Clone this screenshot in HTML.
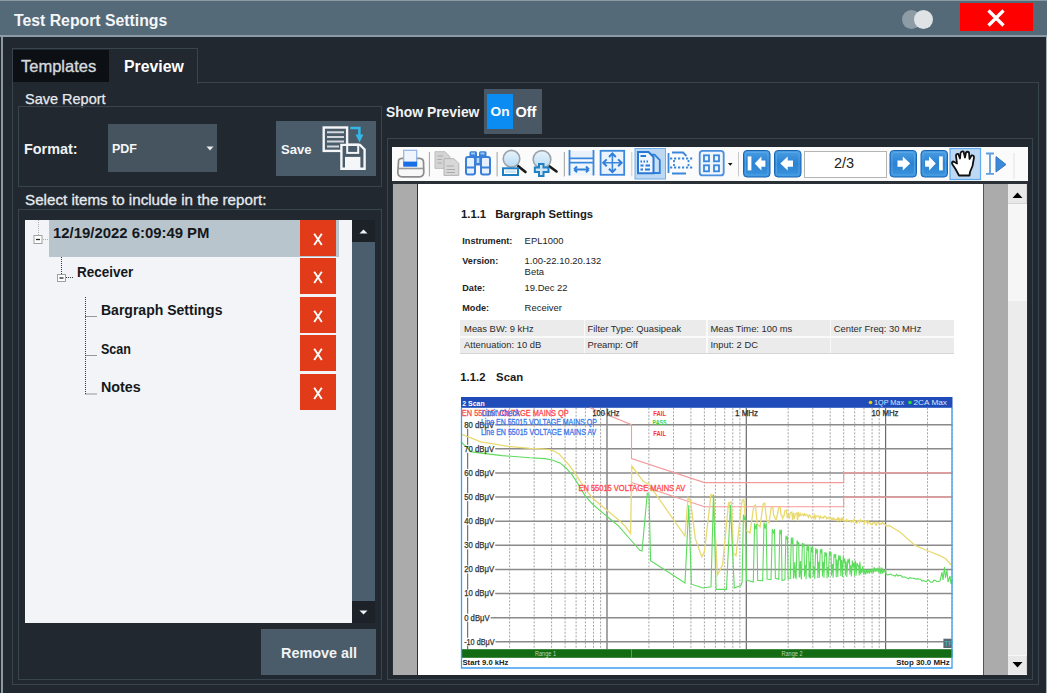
<!DOCTYPE html>
<html><head><meta charset="utf-8">
<style>
html,body{margin:0;padding:0;}
body{width:1047px;height:693px;overflow:hidden;background:#212830;position:relative;font-family:"Liberation Sans",sans-serif;color:#eef0f2;}
.a{position:absolute;}
.t{position:absolute;white-space:nowrap;line-height:1;}
.b{font-weight:bold;}
.bd{position:absolute;border:1px solid #38444e;box-sizing:border-box;}
</style></head><body>
<!-- window frame -->
<div class="a" style="left:0;top:0;width:1047px;height:693px;background:#212830;"></div>
<div class="a" style="left:1px;top:0;width:2px;height:693px;background:#8c9aa4;"></div>
<div class="a" style="left:1046px;top:0;width:1px;height:693px;background:#a4b0b8;"></div>
<!-- title bar -->
<div class="a" style="left:0;top:0;width:1047px;height:35px;background:#556a79;"></div>
<div class="a" style="left:0;top:0;width:1047px;height:1px;background:#8c9aa4;"></div>
<div class="a" style="left:0;top:35px;width:1047px;height:2px;background:#8c9ba5;"></div>
<div class="t b" style="left:14px;top:13px;font-size:15.8px;color:#f4f6f8;">Test Report Settings</div>
<div class="a" style="left:902px;top:10px;width:19px;height:19px;border-radius:50%;background:#8e9ca6;"></div>
<div class="a" style="left:914px;top:10px;width:19px;height:19px;border-radius:50%;background:#dfe3e6;"></div>
<div class="a" style="left:960px;top:3px;width:73px;height:28px;background:#fe0000;"></div>
<svg class="a" style="left:960px;top:3px" width="73" height="28"><path d="M28.5 7.5 L43.5 22.5 M43.5 7.5 L28.5 22.5" stroke="#fff" stroke-width="3.2"/></svg>

<!-- tabs -->
<div class="bd" style="left:12px;top:48px;width:186px;height:36px;border-bottom:none;"></div>
<div class="a" style="left:12.5px;top:50px;width:96.5px;height:32px;background:#0c1014;"></div>
<div class="t" style="left:21px;top:58px;font-size:16.5px;color:#d4d9de;-webkit-text-stroke:0.35px #d4d9de;">Templates</div>
<div class="t b" style="left:124px;top:58.5px;font-size:15.8px;color:#ffffff;">Preview</div>

<!-- main panel -->
<div class="bd" style="left:12px;top:82px;width:1027px;height:603px;border-top:none;"></div>
<div class="a" style="left:197px;top:82px;width:842px;height:1px;background:#38444e;"></div>

<!-- Save report group -->
<div class="t" style="left:25px;top:91.5px;font-size:14.5px;color:#e6eaee;-webkit-text-stroke:0.25px #e6eaee;">Save Report</div>
<div class="bd" style="left:18px;top:106px;width:364px;height:81px;"></div>
<div class="t b" style="left:24px;top:142px;font-size:14.4px;color:#f0f2f4;">Format:</div>
<div class="a" style="left:108px;top:124px;width:109px;height:48px;background:#46545f;"></div>
<div class="t b" style="left:112px;top:143px;font-size:12.5px;color:#f4f6f8;">PDF</div>
<svg class="a" style="left:206px;top:145.5px" width="9" height="6"><path d="M0.5 0.5 L7.5 0.5 L4 4.5 Z" fill="#e8ecef"/></svg>
<div class="a" style="left:276px;top:121px;width:100px;height:55px;background:#4a5b69;"></div>
<div class="t b" style="left:281px;top:143px;font-size:13.1px;color:#f4f6f8;">Save</div>

<!-- Select items -->
<div class="t" style="left:25px;top:192px;font-size:15.2px;color:#e6eaee;-webkit-text-stroke:0.3px #e6eaee;">Select items to include in the report:</div>
<div class="bd" style="left:18px;top:209px;width:364px;height:471px;"></div>
<div class="a" style="left:25px;top:220px;width:327px;height:403px;background:#f2f4f7;"></div>
<div class="a" style="left:352px;top:220px;width:23px;height:403px;background:#1c2228;"></div>
<div class="a" style="left:352px;top:242px;width:23px;height:359px;background:#4a5e6e;"></div>
<div class="a" style="left:261px;top:629px;width:115px;height:46px;background:#4a5b69;"></div>
<div class="t b" style="left:281px;top:646px;font-size:14.4px;color:#f0f2f4;">Remove all</div>


<!-- tree content -->
<div class="a" style="left:49px;top:220px;width:290px;height:37px;background:#b9c5cd;"></div>
<svg class="a" style="left:25px;top:220px" width="327" height="403">
<g stroke="#3a3a3a" stroke-width="1" stroke-dasharray="1,1" fill="none">
<path d="M13.5 0 V15" stroke="#b0b0b0"/><path d="M18 19.5 H24" stroke="#b0b0b0"/>
<path d="M36.5 37 V54"/><path d="M41 57.5 H48"/>
<path d="M60.5 77 V174"/><path d="M60.5 96.5 H72"/><path d="M60.5 135.5 H72"/><path d="M60.5 174 H72"/>
</g>
<rect x="9" y="15.5" width="8" height="8" fill="#fff" stroke="#a0a0a0"/><path d="M11 19.5 H15" stroke="#222" stroke-width="1.3"/>
<rect x="32.5" y="54.5" width="8" height="7" fill="#fff" stroke="#a0a0a0"/><path d="M34.5 58 H38.5" stroke="#222" stroke-width="1.3"/>
</svg>
<div class="t b" style="left:53px;top:225.5px;font-size:14.9px;color:#14181c;">12/19/2022 6:09:49 PM</div>
<div class="t b" style="left:77px;top:264.5px;font-size:14.2px;color:#14181c;transform:scaleX(0.95);transform-origin:0 0;">Receiver</div>
<div class="t b" style="left:101px;top:303px;font-size:14.6px;color:#14181c;transform:scaleX(0.96);transform-origin:0 0;">Bargraph Settings</div>
<div class="t b" style="left:101px;top:341.5px;font-size:14.6px;color:#14181c;transform:scaleX(0.86);transform-origin:0 0;">Scan</div>
<div class="t b" style="left:101px;top:380px;font-size:14.6px;color:#14181c;transform:scaleX(0.98);transform-origin:0 0;">Notes</div>
<div class="a" style="left:300px;top:220.0px;width:36px;height:36px;background:#e23b19;"></div>
<div class="a" style="left:300px;top:258.4px;width:36px;height:36px;background:#e23b19;"></div>
<div class="a" style="left:300px;top:296.8px;width:36px;height:36px;background:#e23b19;"></div>
<div class="a" style="left:300px;top:335.2px;width:36px;height:36px;background:#e23b19;"></div>
<div class="a" style="left:300px;top:373.6px;width:36px;height:36px;background:#e23b19;"></div>
<svg class="a" style="left:300px;top:220.0px" width="36" height="36"><path d="M14.2 13.7 L21.8 25 M21.8 13.7 L14.2 25" stroke="#fff" stroke-width="1.9" stroke-linecap="butt"/></svg>
<svg class="a" style="left:300px;top:258.4px" width="36" height="36"><path d="M14.2 13.7 L21.8 25 M21.8 13.7 L14.2 25" stroke="#fff" stroke-width="1.9" stroke-linecap="butt"/></svg>
<svg class="a" style="left:300px;top:296.8px" width="36" height="36"><path d="M14.2 13.7 L21.8 25 M21.8 13.7 L14.2 25" stroke="#fff" stroke-width="1.9" stroke-linecap="butt"/></svg>
<svg class="a" style="left:300px;top:335.2px" width="36" height="36"><path d="M14.2 13.7 L21.8 25 M21.8 13.7 L14.2 25" stroke="#fff" stroke-width="1.9" stroke-linecap="butt"/></svg>
<svg class="a" style="left:300px;top:373.6px" width="36" height="36"><path d="M14.2 13.7 L21.8 25 M21.8 13.7 L14.2 25" stroke="#fff" stroke-width="1.9" stroke-linecap="butt"/></svg>
<svg class="a" style="left:358px;top:228px" width="12" height="8"><path d="M1.5 5.5 L5.5 1.5 L9.5 5.5 Z" fill="#f0f2f4"/></svg>
<svg class="a" style="left:358px;top:609px" width="12" height="8"><path d="M1.5 1.5 L5.5 5.5 L9.5 1.5 Z" fill="#f0f2f4"/></svg>
<svg class="a" style="left:315px;top:120px" width="60" height="55">
<rect x="8.7" y="7.5" width="23.4" height="23.4" fill="none" stroke="#f4f6f8" stroke-width="2.4"/>
<g stroke="#d4d8dc" stroke-width="2"><path d="M12 12.3 H29 M12 17.1 H29 M12 21.4 H29 M12 26.6 H24"/></g>
<path d="M26.4 24.9 H45 L49.6 29.5 V48.8 H26.4 Z" fill="#4a5b69" stroke="#f4f6f8" stroke-width="2.4"/>
<rect x="32.2" y="24.5" width="11" height="8.4" fill="none" stroke="#f4f6f8" stroke-width="2"/>
<rect x="30" y="36.9" width="15.4" height="11.5" fill="#f4f6f8"/>
<path d="M35.3 7.9 H44.4 V15" fill="none" stroke="#33b7e8" stroke-width="2.5"/>
<path d="M40.5 14.5 H48.4 L44.5 22.6 Z" fill="#33b7e8"/>
</svg>
<!-- Preview group -->
<div class="t b" style="left:386px;top:106px;font-size:13.9px;color:#f0f2f4;">Show Preview</div>
<div class="a" style="left:484px;top:89px;width:58px;height:45px;background:#4a5866;"></div>
<div class="a" style="left:487px;top:94px;width:26px;height:35px;background:#0a8cf2;"></div>
<div class="t b" style="left:490.5px;top:105px;font-size:13.7px;color:#fff;">On</div>
<div class="t b" style="left:515.5px;top:105px;font-size:14.5px;color:#fff;">Off</div>
<div class="bd" style="left:387px;top:138px;width:646px;height:542px;"></div>
<div class="a" style="left:392px;top:147px;width:636px;height:34px;background:#fbfbfb;"></div>
<svg class="a" style="left:392px;top:147px" width="636" height="34">
<defs>
<linearGradient id="nb" x1="0" y1="0" x2="0" y2="1"><stop offset="0" stop-color="#4c9ee2"/><stop offset="0.5" stop-color="#2a82d2"/><stop offset="1" stop-color="#3d95dd"/></linearGradient>
<linearGradient id="lens" x1="0" y1="0" x2="0" y2="1"><stop offset="0" stop-color="#e8f4fc"/><stop offset="1" stop-color="#b9dcf4"/></linearGradient>
</defs>
<!-- printer -->
<path d="M6.5 15 Q6 11.5 10 11.3 H27.5 Q31.5 11.5 31.5 15 L31.8 25.5 Q31.5 29.5 27.5 29.8 H10 Q6 29.5 5.8 25.5 Z" fill="#f8f8f8" stroke="#8c8c8c" stroke-width="1.7"/>
<path d="M6.5 21.5 H31" stroke="#9a9a9a" stroke-width="1.6"/>
<rect x="11.7" y="3.3" width="13" height="12" fill="#f0f5fd" stroke="#8fb3e6" stroke-width="1.2"/>
<rect x="11.2" y="14.7" width="14" height="5" fill="#1a6fe6"/>
<path d="M37.4 5 V29.4" stroke="#a0a0a0" stroke-width="1"/>
<!-- copy -->
<path d="M43 4.7 H53 L57.8 9.5 V21.4 H43 Z" fill="#d4d4d4" stroke="#bdbdbd" stroke-width="1"/>
<path d="M52 11.7 H62 L66.8 16.5 V28.4 H52 Z" fill="#d8d8d8" stroke="#b4b4b4" stroke-width="1"/>
<path d="M45.5 9 H51 M45.5 12.5 H50 M45.5 16 H50 M54.5 19 H62 M54.5 22.5 H63 M54.5 25.5 H63" stroke="#ababab" stroke-width="1"/>
<!-- binoculars -->
<rect x="77.5" y="4.3" width="7.5" height="6" rx="1.5" fill="#3a80d8"/>
<rect x="87" y="4.3" width="7.5" height="6" rx="1.5" fill="#3a80d8"/>
<rect x="79" y="5.5" width="4" height="2" fill="#9cc6f2"/>
<rect x="88.5" y="5.5" width="4" height="2" fill="#9cc6f2"/>
<rect x="74" y="10" width="9" height="17.6" rx="2" fill="#e6f1fc" stroke="#3a80d8" stroke-width="2"/>
<rect x="89" y="10" width="9" height="17.6" rx="2" fill="#e6f1fc" stroke="#3a80d8" stroke-width="2"/>
<path d="M74 20.5 H83 M89 20.5 H98" stroke="#3a80d8" stroke-width="2"/>
<rect x="83" y="9" width="6" height="9.5" fill="#3a80d8"/>
<rect x="84.7" y="11" width="2.6" height="5" fill="#b8d8f6"/>
<path d="M105.1 5 V29.4" stroke="#a0a0a0" stroke-width="1"/>
<!-- zoom out -->
<path d="M126 19 L133.5 25" stroke="#1a1a1a" stroke-width="2.6" stroke-linecap="round"/>
<circle cx="119.5" cy="11.7" r="8.3" fill="url(#lens)" stroke="#9ca4aa" stroke-width="1.6"/>
<rect x="111" y="21.3" width="15" height="6.7" fill="#fff" stroke="#1f80c4" stroke-width="2"/>
<rect x="113" y="23.3" width="11" height="2.7" fill="#cfe6f6"/>
<!-- zoom in -->
<path d="M157 19 L164.5 24.5" stroke="#1a1a1a" stroke-width="2.6" stroke-linecap="round"/>
<circle cx="150" cy="12.4" r="8.8" fill="url(#lens)" stroke="#9ca4aa" stroke-width="1.6"/>
<path d="M147 17 H151.5 V20.5 H156.5 V25 H151.5 V29 H147 V25 H142.8 V20.5 H147 Z" fill="#cfe6f6" stroke="#1f80c4" stroke-width="2"/>
<path d="M172.3 5 V29.4" stroke="#a0a0a0" stroke-width="1"/>
<!-- fit width -->
<rect x="178" y="4" width="23.5" height="7" fill="#e9f2fb"/>
<rect x="178" y="15.5" width="23.5" height="13" fill="#eef5fc"/>
<path d="M177.5 3 V28.6 M201.5 3 V28.6 M177.5 11.4 H201.5 M177.5 15.7 H201.5" stroke="#3b87dc" stroke-width="1.8" fill="none"/>
<path d="M182 22.4 H197 M182 22.4 L185 19.5 M182 22.4 L185 25.3 M197 22.4 L194 19.5 M197 22.4 L194 25.3" stroke="#2f7fd8" stroke-width="2" fill="none"/>
<!-- fit page -->
<rect x="208.6" y="3.8" width="23.6" height="24" fill="#eaf3fc" stroke="#3b87dc" stroke-width="1.8"/>
<path d="M220.4 7 V25 M211.5 15.8 H229.5" stroke="#3b87dc" stroke-width="1.6"/>
<path d="M217 10 L220.4 6.5 L223.8 10 M217 21.8 L220.4 25.2 L223.8 21.8 M214.7 12.4 L211.2 15.8 L214.7 19.2 M226.1 12.4 L229.6 15.8 L226.1 19.2" stroke="#2f7fd8" stroke-width="2" fill="none"/>
<path d="M239.8 5 V29.4" stroke="#c8c8c8" stroke-width="1"/>
<!-- single page selected -->
<rect x="243" y="1.5" width="30.5" height="30.5" fill="#bcd8f2" stroke="#72aeea" stroke-width="1"/>
<path d="M255 7.7 H262.5 L267.8 13 V26 H255 Z" fill="#c9e0f6" stroke="#2f7fd8" stroke-width="1.8"/>
<path d="M246 5 H256.5 L261.5 10 V26.3 H246 Z" fill="#eef5fc" stroke="#2a78d6" stroke-width="2"/>
<path d="M248.5 9 H254 M248.5 14.5 H250 M251.5 14.5 H253 M254.5 14.5 H256 M248.5 18.5 H251.5 M253.5 18.5 H258 M248.5 22.5 H251 M253 22.5 H258" stroke="#2a78d6" stroke-width="1.8"/>
<!-- continuous -->
<path d="M276.5 6 V26 M280 5.5 H291 L294.5 9 M280 26.5 H294" stroke="#3b87dc" stroke-width="1.8" fill="none"/>
<path d="M278 11.5 H300.5 M278 20.5 H300.5 M282 13 V19 M296.5 13 V19" stroke="#3b87dc" stroke-width="1.8" stroke-dasharray="2.2,1.8" fill="none"/>
<!-- grid -->
<rect x="307.7" y="3.8" width="24" height="24.6" rx="3" fill="#eef5fc" stroke="#4a8ee0" stroke-width="1.8"/>
<rect x="312" y="8.3" width="5" height="6" fill="none" stroke="#3b87dc" stroke-width="1.8"/>
<rect x="322" y="8.3" width="5" height="6" fill="none" stroke="#3b87dc" stroke-width="1.8"/>
<rect x="312" y="18.3" width="5" height="6" fill="none" stroke="#3b87dc" stroke-width="1.8"/>
<rect x="322" y="18.3" width="5" height="6" fill="none" stroke="#3b87dc" stroke-width="1.8"/>
<path d="M336 16 H340.5 L338.25 18.7 Z" fill="#111"/>
<path d="M346.5 5 V29.4" stroke="#c8c8c8" stroke-width="1"/>
<g transform="translate(351,0)"><rect x="0.5" y="3.5" width="26.5" height="26.5" rx="3.5" fill="url(#nb)" stroke="#1a64b4" stroke-width="1"/><rect x="2.5" y="5.5" width="22.5" height="22.5" rx="2.5" fill="none" stroke="#5fb0ee" stroke-width="1" opacity="0.6"/><rect x="4.7" y="9.4" width="3.7" height="14" fill="#fff"/><path d="M11.7 16.4 L18.4 9.4 V13.4 H22.4 V19.7 H18.4 V23.4 Z" fill="#fff"/></g>
<g transform="translate(382,0)"><rect x="0.5" y="3.5" width="26.5" height="26.5" rx="3.5" fill="url(#nb)" stroke="#1a64b4" stroke-width="1"/><rect x="2.5" y="5.5" width="22.5" height="22.5" rx="2.5" fill="none" stroke="#5fb0ee" stroke-width="1" opacity="0.6"/><path d="M6.3 16.4 L13.7 9.4 V13.4 H19 V19.7 H13.7 V23.4 Z" fill="#fff"/></g>
<g transform="translate(497.5,0)"><rect x="0.5" y="3.5" width="26.5" height="26.5" rx="3.5" fill="url(#nb)" stroke="#1a64b4" stroke-width="1"/><rect x="2.5" y="5.5" width="22.5" height="22.5" rx="2.5" fill="none" stroke="#5fb0ee" stroke-width="1" opacity="0.6"/><path d="M20.7 16.4 L13.3 9.4 V13.4 H8 V19.7 H13.3 V23.4 Z" fill="#fff"/></g>
<g transform="translate(528.5,0)"><rect x="0.5" y="3.5" width="26.5" height="26.5" rx="3.5" fill="url(#nb)" stroke="#1a64b4" stroke-width="1"/><rect x="2.5" y="5.5" width="22.5" height="22.5" rx="2.5" fill="none" stroke="#5fb0ee" stroke-width="1" opacity="0.6"/><rect x="18.6" y="9.4" width="3.7" height="14" fill="#fff"/><path d="M15.3 16.4 L8.6 9.4 V13.4 H4.6 V19.7 H8.6 V23.4 Z" fill="#fff"/></g>
<rect x="412.5" y="4.5" width="82" height="26" fill="#fff" stroke="#b4b4b4" stroke-width="1"/>
<!-- hand selected -->
<rect x="558" y="1.5" width="30.5" height="31" fill="#bcd8f2" stroke="#62aaee" stroke-width="1.2"/>
<path d="M567 28.5 L563.5 22 L560.5 17.5 Q559 15 561.5 14.5 L565 16.5 L564 9 Q564 6.5 566.2 7 L568 11.5 L568.5 6 Q569.5 3.8 571.5 4.5 L573 10.5 L574 5.5 Q575.5 4 577 5.5 L577.5 12 L579.5 8.5 Q582 8 582 10.5 L580.5 19 L578 25 L577.5 28.5 Z" fill="#fff" stroke="#111" stroke-width="1.8" stroke-linejoin="round"/>
<!-- text select -->
<path d="M594 6.5 H602 M594 26.8 H602 M598 6.5 V26.8" stroke="#5d9ee0" stroke-width="1.8"/>
<path d="M604 9.6 L614 17.5 L604 25 Z" fill="#3d88d8" stroke="#2f78c8" stroke-width="1"/>
<path d="M622 6 V32" stroke="#e2e2e2" stroke-width="1"/>
</svg>
<div class="t" style="left:834px;top:156px;font-size:14.5px;color:#222;">2/3</div>
<div class="a" style="left:392px;top:181px;width:636px;height:494px;background:#2b3036;"></div>
<div class="a" style="left:393px;top:184px;width:24px;height:491px;background:#ababab;"></div>
<div class="a" style="left:418px;top:184px;width:565px;height:491px;background:#ffffff;"></div>
<div class="a" style="left:983px;top:184px;width:25px;height:491px;background:#ababab;"></div><div class="a" style="left:983px;top:184px;width:1px;height:491px;background:#555;"></div>
<div class="a" style="left:1008px;top:184px;width:19px;height:491px;background:#f0f0f0;"></div>









<!-- PAGE START -->
<div class="t b" style="left:461px;top:208.63px;font-size:11.3px;color:#1a1a1a;">1.1.1</div>
<div class="t b" style="left:495.2px;top:208.63px;font-size:11.3px;color:#1a1a1a;">Bargraph Settings</div>
<div class="t b" style="left:462.3px;top:237.20px;font-size:9.1px;color:#222;">Instrument:</div>
<div class="t" style="left:524.6px;top:236.10px;font-size:9.45px;color:#222;">EPL1000</div>
<div class="t b" style="left:462.3px;top:257.20px;font-size:9.1px;color:#222;">Version:</div>
<div class="t" style="left:524.6px;top:256.10px;font-size:9.45px;color:#222;">1.00-22.10.20.132</div>
<div class="t b" style="left:462.3px;top:284.00px;font-size:9.1px;color:#222;">Date:</div>
<div class="t" style="left:524.6px;top:282.90px;font-size:9.45px;color:#222;">19.Dec 22</div>
<div class="t b" style="left:462.3px;top:303.90px;font-size:9.1px;color:#222;">Mode:</div>
<div class="t" style="left:524.6px;top:302.80px;font-size:9.45px;color:#222;">Receiver</div>
<div class="t" style="left:524.6px;top:266.80px;font-size:9.45px;color:#222;">Beta</div>
<div class="a" style="left:460px;top:320px;width:494px;height:32.5px;background:#ebebeb;border-bottom:1px solid #d6d6d6;"></div>
<div class="a" style="left:460px;top:336px;width:494px;height:1.5px;background:#fafafa;"></div>
<div class="a" style="left:583.5px;top:320px;width:1.5px;height:32.5px;background:#fafafa;"></div>
<div class="a" style="left:706.4px;top:320px;width:1.5px;height:32.5px;background:#fafafa;"></div>
<div class="a" style="left:829.8px;top:320px;width:1.5px;height:32.5px;background:#fafafa;"></div>
<div class="t" style="left:464.1px;top:323.74px;font-size:9.4px;color:#2a2a2a;">Meas BW: 9 kHz</div>
<div class="t" style="left:464.1px;top:340.04px;font-size:9.4px;color:#2a2a2a;">Attenuation: 10 dB</div>
<div class="t" style="left:587.5px;top:323.74px;font-size:9.4px;color:#2a2a2a;">Filter Type: Quasipeak</div>
<div class="t" style="left:587.5px;top:340.04px;font-size:9.4px;color:#2a2a2a;">Preamp: Off</div>
<div class="t" style="left:710.5px;top:323.74px;font-size:9.4px;color:#2a2a2a;">Meas Time: 100 ms</div>
<div class="t" style="left:710.5px;top:340.04px;font-size:9.4px;color:#2a2a2a;">Input: 2 DC</div>
<div class="t" style="left:833.8px;top:323.74px;font-size:9.4px;color:#2a2a2a;">Center Freq: 30 MHz</div>
<div class="t b" style="left:460.3px;top:371.83px;font-size:11.3px;color:#1a1a1a;">1.1.2</div>
<div class="t b" style="left:496.1px;top:371.83px;font-size:11.3px;color:#1a1a1a;">Scan</div>
<svg class="a" style="left:0;top:0" width="1047" height="693" viewBox="0 0 1047 693">
<rect x="461" y="397" width="491.5" height="271.5" fill="#fff"/>
<rect x="461" y="397" width="491.5" height="10.800000000000011" fill="#1f4cb8"/>
<g stroke="#9c9c9c" stroke-width="0.9" stroke-dasharray="2,1.5" fill="none"><path d="M509.6 407.8 V649.2"/><path d="M534.2 407.8 V649.2"/><path d="M551.6 407.8 V649.2"/><path d="M565.1 407.8 V649.2"/><path d="M576.1 407.8 V649.2"/><path d="M585.4 407.8 V649.2"/><path d="M593.5 407.8 V649.2"/><path d="M600.6 407.8 V649.2"/><path d="M648.9 407.8 V649.2"/><path d="M673.5 407.8 V649.2"/><path d="M690.9 407.8 V649.2"/><path d="M704.4 407.8 V649.2"/><path d="M715.4 407.8 V649.2"/><path d="M724.7 407.8 V649.2"/><path d="M732.8 407.8 V649.2"/><path d="M739.9 407.8 V649.2"/><path d="M788.2 407.8 V649.2"/><path d="M812.8 407.8 V649.2"/><path d="M830.2 407.8 V649.2"/><path d="M843.7 407.8 V649.2"/><path d="M854.7 407.8 V649.2"/><path d="M864.0 407.8 V649.2"/><path d="M872.1 407.8 V649.2"/><path d="M879.2 407.8 V649.2"/><path d="M927.5 407.8 V649.2"/><path d="M952.1 407.8 V649.2"/></g>
<g stroke="#6a6a6a" stroke-width="1.2" fill="none"><path d="M607.0 407.8 V649.2"/><path d="M746.3 407.8 V649.2"/><path d="M885.6 407.8 V649.2"/></g>
<g stroke="#555" stroke-width="1" fill="none"><path d="M467.7 428.7 V444.8"/><path d="M467.7 452.8 V468.9"/><path d="M467.7 476.9 V493.1"/><path d="M467.7 501.1 V517.2"/><path d="M467.7 525.2 V541.3"/><path d="M467.7 549.3 V565.5"/><path d="M467.7 573.5 V589.6"/><path d="M467.7 597.6 V613.7"/><path d="M467.7 621.7 V637.8"/><path d="M467.7 645.8 V649.2"/></g>
<g stroke="#8a8a8a" stroke-width="1.5" fill="none"><path d="M495.2 424.7 H952.5"/><path d="M495.2 448.8 H952.5"/><path d="M495.2 472.9 H952.5"/><path d="M495.2 497.1 H952.5"/><path d="M495.2 521.2 H952.5"/><path d="M495.2 545.3 H952.5"/><path d="M495.2 569.5 H952.5"/><path d="M495.2 593.6 H952.5"/><path d="M490.6 617.7 H952.5"/><path d="M495.5 641.8 H952.5"/></g>
<polyline points="590.0,407.8 631.5,424.7 631.5,458.5 704.4,482.6 843.7,482.6 843.7,472.9 952.5,472.9" fill="none" stroke="#f59a9a" stroke-width="1.1"/>
<polyline points="631.5,482.6 704.4,506.7 843.7,506.7 843.7,497.1 952.5,497.1" fill="none" stroke="#f59a9a" stroke-width="1.1"/>
<polyline points="461.0,434.2 480.9,441.8 508.4,446.4 530.0,448.3 542.0,448.9 549.0,449.6 554.2,451.0 559.0,454.0 563.4,458.6 569.0,465.0 575.6,473.9 581.0,482.5 587.8,492.3 593.0,498.5 600.0,504.5 609.0,512.0 618.4,519.8 625.0,526.0 630.6,533.5 631.8,466.0 643.4,481.6 648.6,484.0 685.0,536.0 688.0,497.7 690.6,501.0 695.3,538.7 701.8,556.9 704.4,551.7 711.0,494.5 713.5,495.8 717.4,575.0 722.6,564.7 728.6,502.3 728.7,507.8 729.5,502.8 731.1,501.8 731.9,509.8 732.9,552.7 736.0,555.7 741.4,505.5 742.2,500.5 743.8,499.5 744.6,507.5 745.6,530.0 750.0,533.0 753.0,511.2 753.8,506.2 755.4,505.2 756.2,513.2 757.2,524.0 760.0,527.0 762.4,509.0 763.2,504.0 764.8,503.0 765.6,511.0 766.6,520.0 769.0,523.0 770.4,513.0 771.2,508.0 772.8,507.0 773.6,515.0 774.6,517.0 776.0,520.0 777.8,513.0 778.6,508.0 780.2,507.0 781.0,515.0 782.0,515.5 782.5,518.5 784.0,516.0 784.8,511.0 786.4,510.0 787.2,518.0 788.2,514.0 788.5,517.0 789.4,518.0 790.2,513.0 791.8,512.0 792.6,520.0 793.6,512.5 793.5,515.5 794.4,519.0 795.2,514.0 796.8,513.0 797.6,521.0 798.6,512.0 798.0,515.0 798.0,514.4 798.8,513.8 799.6,515.7 800.4,513.7 801.2,515.5 802.0,514.9 802.8,513.9 803.6,515.6 804.4,514.0 805.2,515.5 806.0,514.3 806.8,514.5 807.6,515.8 808.4,517.3 809.2,514.9 810.0,515.3 810.8,516.8 811.6,518.1 812.4,516.8 813.2,516.3 814.0,518.4 814.8,515.2 815.6,518.2 816.4,516.2 817.2,515.8 818.0,515.8 818.8,516.6 819.6,518.5 820.4,516.3 821.2,517.8 822.0,518.1 822.8,517.2 823.6,517.9 824.4,516.3 825.2,516.4 826.0,517.0 826.8,518.8 827.6,517.9 828.4,517.6 829.2,518.7 830.0,518.3 830.8,517.8 831.6,519.7 832.4,519.4 833.2,517.9 834.0,519.2 834.8,519.1 835.6,520.4 836.4,520.0 837.2,518.5 838.0,521.0 838.8,518.0 839.6,519.2 840.4,520.5 841.2,518.4 842.0,519.7 842.8,518.2 843.6,520.5 844.4,521.0 845.2,520.4 846.0,521.5 846.8,519.6 847.6,521.1 848.4,520.8 849.2,520.8 850.0,520.5 850.8,521.9 851.6,522.4 852.4,520.8 853.2,521.6 854.0,519.5 854.8,521.9 855.6,521.7 856.4,523.1 857.2,522.5 858.0,520.7 858.8,521.2 859.6,522.3 860.4,520.0 861.2,521.7 862.0,520.7 862.8,520.6 863.6,520.5 864.4,523.1 865.2,520.9 866.0,521.4 866.8,522.0 867.6,523.9 868.4,521.1 869.2,522.5 870.0,523.0 870.8,524.2 871.6,524.1 872.4,524.3 873.2,522.3 874.0,522.9 874.8,522.8 875.6,524.8 876.4,525.1 877.2,522.3 878.0,522.5 878.8,522.8 879.6,522.8 880.4,523.8 881.2,524.3 882.0,523.2 882.8,522.4 883.6,523.9 884.4,523.9 885.2,524.7 886.0,526.1 889.0,525.5 900.0,532.0 915.0,545.4 927.0,550.5 940.0,555.7 946.0,559.0 951.0,565.0" fill="none" stroke="#e8da70" stroke-width="1.3"/>
<polyline points="461.0,441.8 471.7,451.9 502.2,455.6 530.0,457.8 545.0,458.6 553.0,460.2 560.3,463.2 566.0,468.0 572.5,475.4 578.0,484.0 584.8,495.3 592.0,503.5 600.0,510.6 609.0,518.0 618.4,525.9 629.0,538.0 639.8,550.3 642.0,551.0 647.3,493.2 649.0,494.5 650.6,560.8 685.0,582.9 688.8,505.0 691.4,584.2 703.0,588.0 711.0,586.8 713.5,494.5 716.1,589.4 726.5,589.4 730.4,505.0 734.3,588.0 740.8,585.5 742.1,582.3 743.4,514.7 744.7,519.8 745.6,515.7 746.5,580.1 753.3,582.1 754.6,523.3 755.9,529.1 756.8,524.1 757.7,580.5 762.7,580.6 764.0,522.6 765.3,528.6 766.2,522.6 767.1,579.0 771.0,579.7 772.3,529.2 773.6,533.6 774.5,529.1 775.4,578.3 778.8,579.2 779.8,529.8 780.7,534.4 781.4,529.7 782.0,580.5 784.9,579.8 785.9,535.7 786.8,539.7 787.5,536.4 788.1,578.7 790.3,578.5 791.3,537.7 792.2,544.0 792.9,537.4 793.5,578.7 794.0,576.3 794.8,562.0 795.6,577.3 796.1,578.1 797.1,540.4 798.0,544.0 798.7,542.2 799.3,577.4 799.6,575.9 800.4,561.1 801.1,576.9 801.4,579.5 802.4,543.0 803.3,545.6 804.0,543.5 804.6,576.7 804.5,575.6 805.3,564.9 806.1,576.6 806.0,579.3 807.0,545.9 807.9,550.7 808.6,545.0 809.2,577.5 808.9,575.4 809.7,561.7 810.5,576.4 810.1,578.7 811.1,546.5 812.0,552.3 812.7,546.4 813.3,576.8 813.2,575.2 814.0,566.6 814.8,576.2 814.7,578.9 815.7,548.2 816.6,553.5 817.3,549.0 817.9,578.1 817.8,574.9 818.6,561.7 819.4,575.9 819.3,577.7 820.3,549.5 821.2,551.9 821.9,548.9 822.5,576.5 822.4,574.6 823.2,561.7 824.0,575.6 823.9,577.8 824.9,551.9 825.8,555.2 826.5,552.8 827.1,578.3 827.0,574.4 827.8,567.0 828.5,575.4 828.4,576.9 829.4,551.5 830.3,555.2 831.0,551.7 831.6,575.7 831.6,574.1 832.4,564.1 833.1,575.1 833.1,577.7 834.1,553.9 835.0,557.6 835.7,554.2 836.3,577.3 836.2,573.9 837.0,559.5 837.8,574.9 837.7,576.9 838.7,555.2 839.6,560.3 840.3,555.7 840.9,576.0 840.8,573.6 841.6,560.0 842.4,574.6 842.3,576.9 843.3,556.4 844.2,562.7 844.9,558.6 845.5,575.5 845.4,573.4 846.1,561.6 846.9,574.4 846.8,577.0 847.8,559.4 848.7,561.9 849.4,558.4 850.0,574.6 849.9,573.1 850.7,565.3 851.5,574.1 851.4,576.5 852.4,560.6 853.3,567.4 854.0,563.2 854.6,575.8 854.5,572.8 855.3,560.6 856.1,573.8 856.0,575.7 857.0,562.9 857.9,565.7 858.6,565.5 859.2,575.5 859.1,572.6 859.9,561.8 860.7,573.6 860.0,572.7 860.8,568.9 861.9,572.7 862.7,566.4 863.8,574.6 864.6,569.7 865.7,574.3 866.5,569.7 867.6,573.3 868.4,569.5 869.5,573.7 870.3,570.1 871.4,572.1 872.2,568.7 873.3,573.3 874.1,567.2 875.2,571.9 876.0,568.1 877.1,571.7 877.9,567.5 879.0,572.8 879.8,567.3 880.9,574.2 881.7,567.6 882.8,573.6 883.6,570.2 884.7,571.7 885.5,569.0 886.0,573.9 887.5,575.0 889.0,574.6 890.5,574.1 892.0,575.0 893.5,575.3 895.0,576.3 896.5,574.4 898.0,576.0 899.5,575.3 901.0,575.6 902.5,577.4 904.0,576.8 905.5,577.2 907.0,578.1 908.5,578.8 910.0,577.5 911.5,578.3 913.0,578.2 914.5,578.4 916.0,579.2 917.5,578.7 919.0,579.2 920.5,579.2 922.0,581.0 923.5,580.4 925.0,581.2 926.5,581.6 928.0,579.7 929.5,580.9 931.0,582.3 932.5,582.2 934.0,580.2 935.5,580.4 937.0,581.7 940.0,581.0 942.0,572.0 943.0,580.0 944.5,567.0 945.5,578.0 947.0,570.0 948.0,582.0 950.0,576.0 951.0,584.0 952.0,580.0" fill="none" stroke="#5cdc5c" stroke-width="1.1"/>
<g font-family="Liberation Sans" font-size="8.2" fill="#333" stroke="#333" stroke-width="0.25"><text x="464.2" y="427.5" textLength="30" lengthAdjust="spacingAndGlyphs">80 dBμV</text><text x="464.2" y="451.6" textLength="30" lengthAdjust="spacingAndGlyphs">70 dBμV</text><text x="464.2" y="475.8" textLength="30" lengthAdjust="spacingAndGlyphs">60 dBμV</text><text x="464.2" y="499.9" textLength="30" lengthAdjust="spacingAndGlyphs">50 dBμV</text><text x="464.2" y="524.0" textLength="30" lengthAdjust="spacingAndGlyphs">40 dBμV</text><text x="464.2" y="548.1" textLength="30" lengthAdjust="spacingAndGlyphs">30 dBμV</text><text x="464.2" y="572.2" textLength="30" lengthAdjust="spacingAndGlyphs">20 dBμV</text><text x="464.2" y="596.4" textLength="30" lengthAdjust="spacingAndGlyphs">10 dBμV</text><text x="464.2" y="620.5" textLength="25.4" lengthAdjust="spacingAndGlyphs">0 dBμV</text><text x="464.2" y="644.6" textLength="30.3" lengthAdjust="spacingAndGlyphs">-10 dBμV</text></g>
<g font-family="Liberation Sans" font-size="8.2" fill="#2a2a2a" stroke="#2a2a2a" stroke-width="0.25">
<text x="592.5" y="416" textLength="27" lengthAdjust="spacingAndGlyphs">100 kHz</text>
<text x="735" y="416" textLength="23" lengthAdjust="spacingAndGlyphs">1 MHz</text>
<text x="871.5" y="416" textLength="27" lengthAdjust="spacingAndGlyphs">10 MHz</text>
</g>
<g font-family="Liberation Sans" font-size="8.4" stroke-width="0.3">
<text x="461.8" y="416.2" fill="#ff4a4a" stroke="#ff4a4a" textLength="107" lengthAdjust="spacingAndGlyphs">EN 55015 VOLTAGE MAINS QP</text>
<text x="481.7" y="416.2" fill="#3b78ea" stroke="#3b78ea" textLength="38" lengthAdjust="spacingAndGlyphs">Limit Check</text>
<text x="480.9" y="425.3" fill="#3b78ea" stroke="#3b78ea" textLength="116" lengthAdjust="spacingAndGlyphs">Line EN 55015 VOLTAGE MAINS QP</text>
<text x="480.9" y="435.3" fill="#3b78ea" stroke="#3b78ea" textLength="115.4" lengthAdjust="spacingAndGlyphs">Line EN 55015 VOLTAGE MAINS AV</text>
<text x="578.4" y="491.3" fill="#ff4a4a" stroke="#ff4a4a" textLength="106.8" lengthAdjust="spacingAndGlyphs">EN 55015 VOLTAGE MAINS AV</text>
</g>
<g font-family="Liberation Sans" font-size="7.6" font-weight="bold">
<text x="653.3" y="415.6" fill="#ff3030" textLength="12.7" lengthAdjust="spacingAndGlyphs">FAIL</text>
<text x="652.5" y="425.2" fill="#40d040" textLength="14" lengthAdjust="spacingAndGlyphs">PASS</text>
<text x="653.3" y="435.5" fill="#ff3030" textLength="12.7" lengthAdjust="spacingAndGlyphs">FAIL</text>
</g>
<text x="462.3" y="405.5" font-family="Liberation Sans" font-size="8" font-weight="bold" fill="#fff" textLength="22.4" lengthAdjust="spacingAndGlyphs">2 Scan</text>
<circle cx="870.5" cy="402.5" r="1.8" fill="#f0d000"/><text x="874" y="405.3" font-family="Liberation Sans" font-size="8" fill="#d8e4ff" textLength="30" lengthAdjust="spacingAndGlyphs">1QP Max</text>
<circle cx="910" cy="402.5" r="1.8" fill="#30e030"/><text x="913.5" y="405.3" font-family="Liberation Sans" font-size="8" fill="#d8e4ff" textLength="33.5" lengthAdjust="spacingAndGlyphs">2CA Max</text>
<rect x="943.4" y="638.7" width="8.6" height="9.3" fill="#5a6a72"/><text x="944.2" y="646" font-family="Liberation Sans" font-size="7" fill="#38c8c8">TF</text>
<rect x="461" y="649.2" width="491.5" height="8.6" fill="#136b13"/>
<path d="M631.5 649.2 V657.8000000000001" stroke="#6aa86a" stroke-width="0.8"/>
<text x="535" y="656" font-family="Liberation Sans" font-size="6.5" fill="#b8d8b8" textLength="21" lengthAdjust="spacingAndGlyphs">Range 1</text>
<text x="781.5" y="656" font-family="Liberation Sans" font-size="6.5" fill="#b8d8b8" textLength="21" lengthAdjust="spacingAndGlyphs">Range 2</text>
<text x="462.5" y="665.3" font-family="Liberation Sans" font-size="8" font-weight="bold" fill="#222" textLength="45.9" lengthAdjust="spacingAndGlyphs">Start 9.0 kHz</text>
<text x="896.2" y="665.3" font-family="Liberation Sans" font-size="8" font-weight="bold" fill="#222" textLength="53.4" lengthAdjust="spacingAndGlyphs">Stop 30.0 MHz</text>
<path d="M461.5 407.8 V668 H952.0 V407.8" fill="none" stroke="#3ca0f0" stroke-width="1.3"/>
</svg>
<div class="a" style="left:1008px;top:184px;width:19px;height:20px;background:#e8e8e8;border-right:1px solid #d4d4d4;border-bottom:1px solid #d4d4d4;box-sizing:border-box;"></div>
<svg class="a" style="left:1008px;top:184px" width="19" height="20"><path d="M4.5 14 L9.5 8.5 L14.5 14 Z" fill="#000"/></svg>
<div class="a" style="left:1008px;top:204px;width:19px;height:97px;background:#f6f6f6;"></div>
<div class="a" style="left:1008px;top:301px;width:19px;height:354px;background:#ececec;"></div>
<div class="a" style="left:1008px;top:655px;width:19px;height:19px;background:#e8e8e8;border-right:1px solid #d4d4d4;border-top:1px solid #f8f8f8;box-sizing:border-box;"></div>
<svg class="a" style="left:1008px;top:655px" width="19" height="19"><path d="M4.5 7 L9.5 12.4 L14.5 7 Z" fill="#000"/></svg>
<!-- PAGE END -->
</body></html>
